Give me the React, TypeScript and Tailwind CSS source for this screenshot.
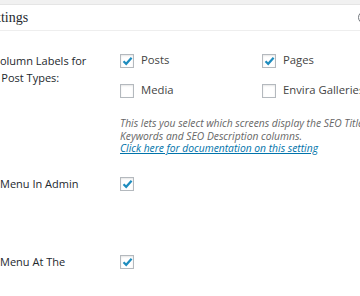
import React from 'react'

const Check: React.FC<{ checked?: boolean }> = ({ checked }) => (
  <span className="flex h-[14px] w-[14px] shrink-0 items-center justify-center border border-[#b4b9be] bg-white shadow-[inset_0_1px_2px_rgba(0,0,0,0.1)]">
    {checked && (
      <svg width="11" height="10" viewBox="0 0 11 10">
        <path d="M1.5 5.2 L4.2 7.8 L9.6 1.8" fill="none" stroke="#1e8cbe" strokeWidth="2.2" />
      </svg>
    )}
  </span>
)

const Option: React.FC<{ label: string; checked?: boolean }> = ({ label, checked }) => (
  <label className="flex h-[17px] items-center gap-[7px] text-[11.3px] text-[#444]">
    <Check checked={checked} />
    <span className="whitespace-nowrap">{label}</span>
  </label>
)

export default function App() {
  return (
    <div className="h-[296px] w-[360px] overflow-hidden bg-[#f1f1f1] font-['Open_Sans',sans-serif]">
      <div className="mt-[4px] h-full border-t border-[#e5e5e5] bg-white">
        <div className="flex h-[26px] items-center justify-between border-b border-[#eeeeee]">
          <h2 className="-ml-[17px] font-['Liberation_Serif',serif] text-[14px] text-[#23282d]">Settings</h2>
          <span className="-mr-[11px] h-[13px] w-[13px] rounded-full border-[1.5px] border-[#72777c]" />
        </div>

        <div className="flex pt-[21px]">
          <div className="w-[120px] shrink-0 text-[11px] font-medium leading-[17px] text-[#23282d]">
            <div className="-ml-[7px] whitespace-nowrap">Column Labels for</div>
            <div className="-ml-[6px] whitespace-nowrap">r Post Types:</div>
          </div>
          <div className="min-w-0 flex-1">
            <div className="grid grid-cols-[142px_1fr] gap-y-[13px]">
              <Option label="Posts" checked />
              <Option label="Pages" checked />
              <Option label="Media" />
              <Option label="Envira Galleries" />
            </div>
            <p className="mt-[18px] whitespace-nowrap text-[10.3px] italic leading-[12.5px] text-[#666]">
              This lets you select which screens display the SEO Title, SEO
              <br />
              Keywords and SEO Description columns.
              <br />
              <a className="text-[#0073aa] underline">Click here for documentation on this setting</a>
            </p>
          </div>
        </div>

        <div className="mt-[21px] flex items-center">
          <div className="w-[120px] shrink-0 whitespace-nowrap text-[11px] font-medium text-[#23282d]">Menu In Admin</div>
          <Check checked />
        </div>

        <div className="mt-[62px] flex items-center">
          <div className="w-[120px] shrink-0 whitespace-nowrap text-[11px] font-medium text-[#23282d]">Menu At The</div>
          <Check checked />
        </div>
      </div>
    </div>
  )
}
